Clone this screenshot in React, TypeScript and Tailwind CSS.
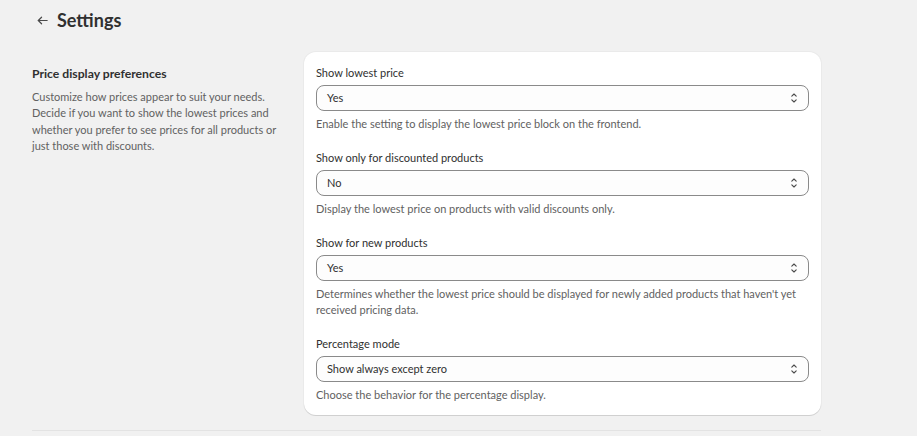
import React from "react";

function Chevrons() {
  return (
    <svg width="10" height="14" viewBox="0 0 10 14" fill="none" stroke="#4a4a4a" strokeWidth="1.1" strokeLinecap="round" strokeLinejoin="round">
      <path d="M2.8 5.2 L5 3 L7.2 5.2" />
      <path d="M2.8 8.8 L5 11 L7.2 8.8" />
    </svg>
  );
}

function Field({ label, value, help }: { label: string; value: string; help: string }) {
  return (
    <div className="flex flex-col">
      <div className="text-[11px] leading-[16px] text-[#303030]">{label}</div>
      <div className="mt-[4px] h-[26px] flex items-center justify-between rounded-[8px] border border-[#8a8a8a] bg-[#fdfdfd] pl-[10px] pr-[9px]">
        <span className="text-[11px] leading-[16px] text-[#303030]">{value}</span>
        <Chevrons />
      </div>
      <div className="mt-[5px] text-[11px] leading-[16px] text-[#616161]">{help}</div>
    </div>
  );
}

export default function App() {
  return (
    <div className="min-h-[436px] w-full bg-[#f1f1f1]" style={{ fontFamily: "Lato, 'Liberation Sans', sans-serif" }}>
      <div className="pl-[32px] pr-[96px]">
        <div className="flex h-[40px] items-center gap-[8px] pl-[4px]">
          <svg width="13" height="13" viewBox="0 0 14 14" fill="none" stroke="#4a4a4a" strokeWidth="1.3" strokeLinecap="round" strokeLinejoin="round">
            <path d="M12 7 H2.5" />
            <path d="M6 3.5 L2.5 7 L6 10.5" />
          </svg>
          <h1 className="text-[18px] font-bold text-[#303030] leading-[24px]">Settings</h1>
        </div>
        <div className="mt-[12px] flex gap-[24px]">
          <div className="w-[248px] shrink-0 pt-[14px]">
            <div className="text-[12.2px] leading-[16px] font-bold text-[#303030]">Price display preferences</div>
            <p className="mt-[7px] text-[11px] leading-[16.4px] text-[#616161]">
              Customize how prices appear to suit your needs. Decide if you want to show the lowest prices and whether you prefer to see prices for all products or just those with discounts.
            </p>
          </div>
          <div className="w-[517px] rounded-[12px] bg-white px-[12px] pt-[13px] pb-[12px] shadow-[0_1px_0_0_rgba(26,26,26,0.12),0_0_0_1px_rgba(26,26,26,0.03)] flex flex-col gap-[18px]">
            <Field label="Show lowest price" value="Yes" help="Enable the setting to display the lowest price block on the frontend." />
            <Field label="Show only for discounted products" value="No" help="Display the lowest price on products with valid discounts only." />
            <Field label="Show for new products" value="Yes" help="Determines whether the lowest price should be displayed for newly added products that haven't yet received pricing data." />
            <Field label="Percentage mode" value="Show always except zero" help="Choose the behavior for the percentage display." />
          </div>
        </div>
        <div className="mt-[15px] h-px w-[789px] bg-[#e3e3e3]" />
      </div>
    </div>
  );
}
